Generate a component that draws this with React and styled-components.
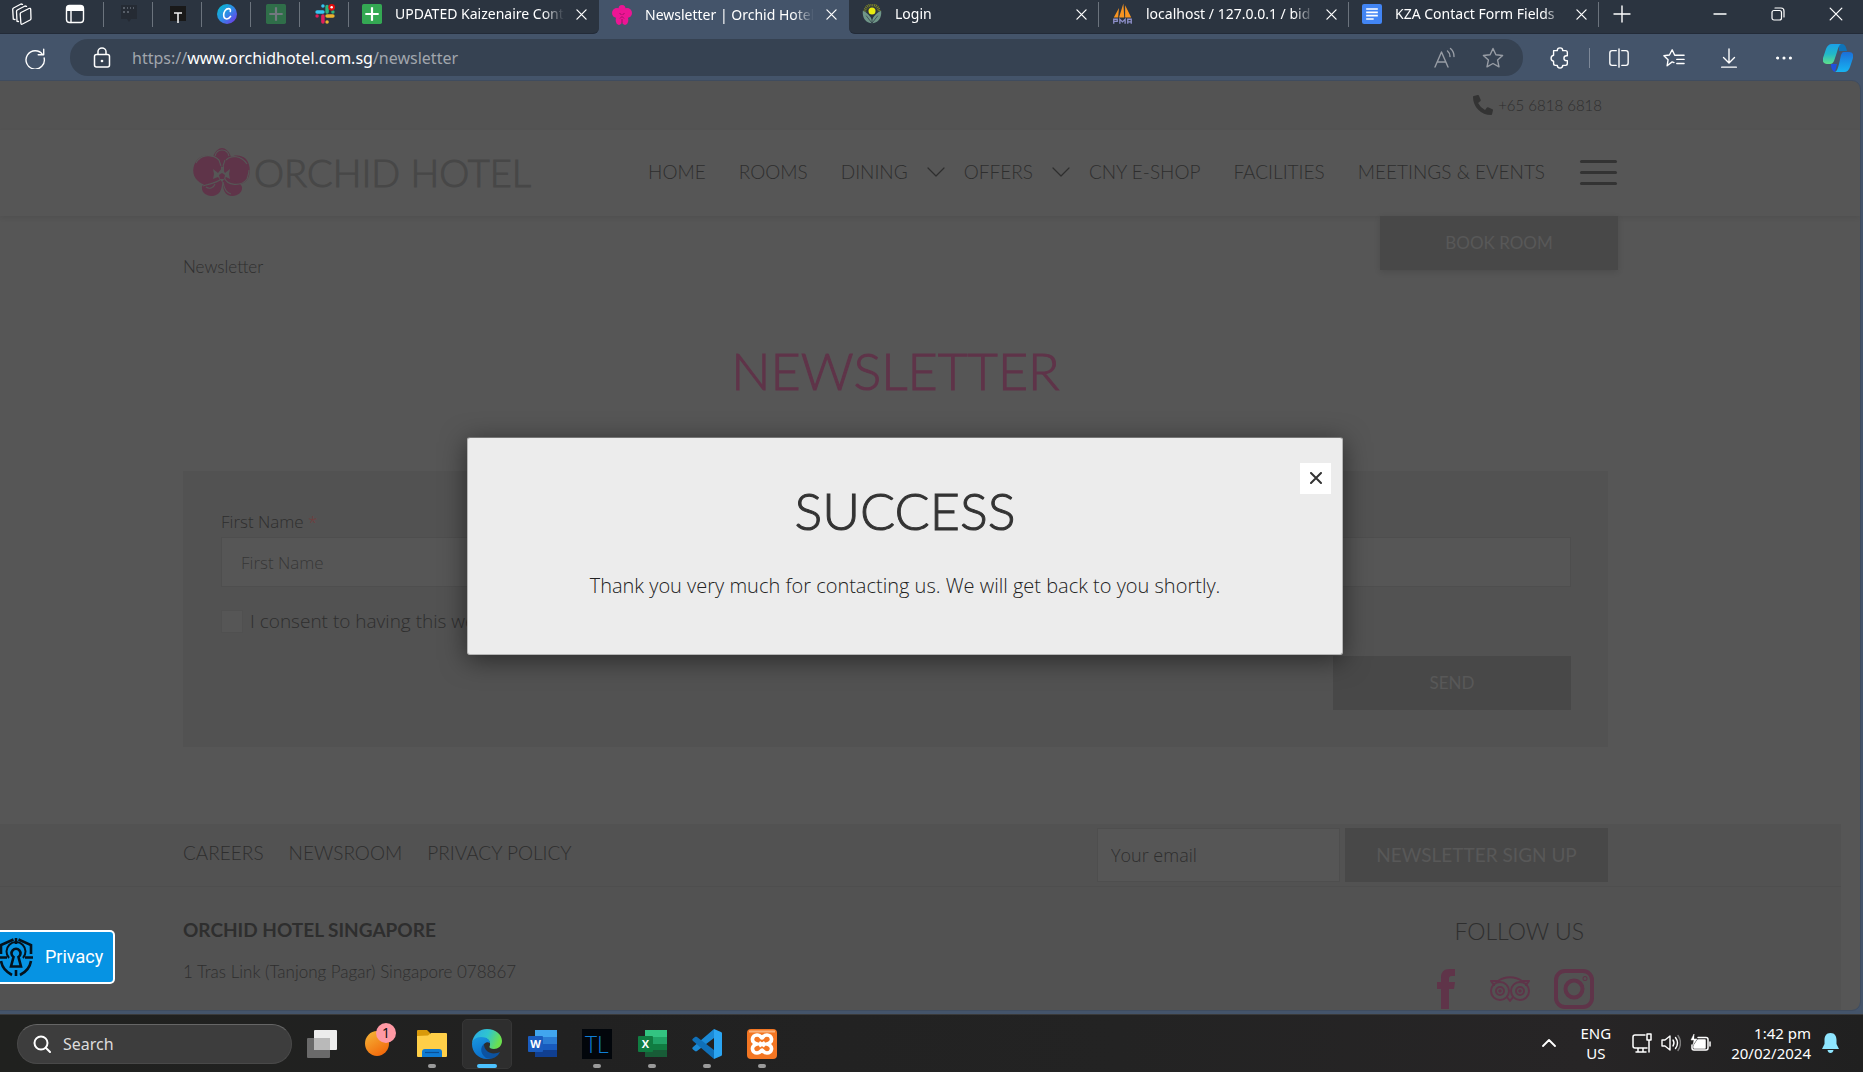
import React from "react";
import styled, { createGlobalStyle } from "styled-components";
import { FaPhoneAlt } from "react-icons/fa";

const UI = `"Noto Sans", "Open Sans", sans-serif`;
const SITE = `Lato, "Open Sans", sans-serif`;
const COPY = `"Open Sans", "Noto Sans", sans-serif`;
const INK = "#2e2e2e";
const ROSE = "#5f3449";

const Global = createGlobalStyle`
  *, *::before, *::after { box-sizing: border-box; }
  body { margin: 0; background: #212121; overflow: hidden; }
  button, input { font: inherit; color: inherit; }
  button { border: 0; padding: 0; background: none; cursor: pointer; }
  a { color: inherit; text-decoration: none; }
  h1, h2, h3, p { margin: 0; font-weight: inherit; }
  svg { display: block; flex: none; }
`;

const Desktop = styled.div`
  height: 100vh;
  display: flex;
  flex-direction: column;
  font-family: ${UI};
`;

const Browser = styled.div`
  flex: 1;
  min-height: 0;
  display: flex;
  flex-direction: column;
  background: #44546a;
  padding: 0 3px 4px 0;
  color: #fff;
`;

/* ---------- tab strip ---------- */
const TabStrip = styled.div`
  display: flex;
  height: 34px;
  margin-right: -3px;
`;

const TabGroup = styled.div`
  display: flex;
  align-items: stretch;
  flex: ${(p) => (p.$grow ? "1" : "none")};
  background: #2b3440;
  border-bottom: 1px solid #232b38;
  border-radius: ${(p) => (p.$grow ? "0 0 0 6px" : "0 0 6px 0")};
`;

const StripTools = styled.div`
  display: flex;
  gap: 29px;
  padding: 2px 17px 7px 10px;
`;

const IconButton = styled.button`
  width: ${(p) => p.$w || 24}px;
  display: flex;
  align-items: center;
  justify-content: center;
`;

const Divider = styled.span`
  width: 1px;
  height: 25px;
  margin: 2px 0 0 -1px;
  background: #6b737d;
`;

const PinnedTab = styled.button`
  width: ${(p) => p.$w || 49}px;
  display: flex;
  align-items: center;
  justify-content: center;
  padding-bottom: 5px;
`;

const TabBox = styled.div`
  width: 250px;
  display: flex;
  align-items: center;
  padding: 0 9px 5px 13px;
`;

const TabTitle = styled.span`
  flex: 1;
  min-width: 0;
  margin: 0 8px 0 13px;
  overflow: hidden;
  white-space: nowrap;
  font-size: 14px;
  line-height: 20px;
  mask-image: linear-gradient(90deg, #000 88%, transparent);
`;

const WindowButtons = styled.div`
  margin-left: auto;
  display: flex;
  gap: 34px;
  padding: 0 15px 5px 0;
`;

/* ---------- address row ---------- */
const Toolbar = styled.div`
  display: flex;
  align-items: center;
  height: 47px;
  flex: none;
  padding-right: 7px;
`;

const Reload = styled(IconButton)`
  width: 70px;
`;

const AddressBar = styled.label`
  flex: 1;
  height: 37px;
  display: flex;
  align-items: center;
  gap: 20px;
  padding: 0 18px 0 22px;
  border-radius: 18px;
  background: #364252;
`;

const Url = styled.span`
  flex: 1;
  font-size: 16px;
  line-height: 22px;
  color: #a1a6ad;
  b { font-weight: 400; color: #fff; }
`;

const AddressTools = styled.div`
  display: flex;
  gap: 25px;
  color: #989da5;
`;

const Extensions = styled.div`
  display: flex;
  align-items: center;
  gap: 18px;
  padding-left: 26px;
`;

const ExtensionSet = styled.div`
  display: flex;
  align-items: center;
  gap: 33px;
`;

const ToolDivider = styled.span`
  width: 1px;
  height: 20px;
  background: #7d8898;
`;

const Copilot = styled(IconButton)`
  margin-left: -5px;
`;

/* ---------- hotel page ---------- */
const Page = styled.main`
  position: relative;
  flex: 1;
  min-height: 0;
  overflow: hidden;
  border-radius: 0 8px 8px 0;
  background: #565656;
  color: ${INK};
  font-family: ${SITE};
  font-weight: 300;
  outline: 1px solid #3f4c5f;
`;

const TopBar = styled.div`
  height: 49px;
  display: flex;
  align-items: center;
  justify-content: flex-end;
  padding: 0 258px 2px 0;
  background: #535353;
`;

const Phone = styled.a`
  display: flex;
  align-items: center;
  gap: 5px;
  font-size: 15px;
  line-height: 20px;
  svg { color: #333; }
`;

const Header = styled.header`
  height: 86px;
  display: flex;
  align-items: center;
  padding: 0 243px 2px 193px;
  box-shadow: 0 2px 5px rgba(0, 0, 0, 0.07);
`;

const Logo = styled.a`
  display: flex;
  align-items: center;
  gap: 4px;
  font-size: 38px;
  line-height: 48px;
  color: #474747;
  -webkit-text-stroke: 1px #474747;
  white-space: nowrap;
`;

const Nav = styled.nav`
  margin-left: auto;
  display: flex;
  align-items: center;
  white-space: nowrap;
  font-size: 19px;
  line-height: 24px;
`;

const NavItem = styled.a`
  display: flex;
  align-items: center;
  gap: ${(p) => (p.$menu ? 19 : 0)}px;
  padding-right: ${(p) => (p.$menu ? 19 : 33)}px;
`;

const Hamburger = styled.button`
  display: grid;
  gap: 8px;
  width: 37px;
  margin-left: 2px;
  span { height: 3px; border-radius: 2px; background: #333; }
`;

const Content = styled.div`
  padding: 0 252px 0 183px;
`;

const SubHeader = styled.div`
  display: flex;
  justify-content: space-between;
  height: 64px;
  margin-right: -10px;
`;

const Crumb = styled.a`
  margin-top: 39px;
  font-size: 17px;
  line-height: 24px;
`;

const DarkButton = styled.button`
  width: ${(p) => p.$w || 238}px;
  height: 54px;
  background: #484848;
  color: #585858;
  font-size: ${(p) => p.$size || 17}px;
  line-height: 24px;
  font-weight: 400;
  box-shadow: ${(p) => (p.$raised ? "0 2px 6px rgba(0,0,0,.12)" : "none")};
`;

const Title = styled.h1`
  margin-top: 60px;
  text-align: center;
  font-size: 52px;
  line-height: 60px;
  color: ${ROSE};
  -webkit-text-stroke: 1px ${ROSE};
`;

const Form = styled.form`
  margin-top: 71px;
  padding: 40px 37px 37px 38px;
  display: flex;
  flex-direction: column;
  background: #525252;
`;

const FieldLabel = styled.label`
  font-family: ${COPY};
  font-size: 17px;
  line-height: 22px;
  margin-bottom: 4px;
  span { color: #743c3c; }
`;

const TextInput = styled.input`
  height: ${(p) => p.$h || 50}px;
  width: ${(p) => p.$w || "100%"};
  padding: 0 ${(p) => p.$pad || 19}px;
  border: 1px solid #4e4e4e;
  border-radius: 0;
  background: #565656;
  font-family: ${COPY};
  font-size: ${(p) => p.$size || 17}px;
  outline: none;
  &::placeholder { color: ${(p) => p.$ink || "#363636"}; opacity: 1; }
`;

const Consent = styled.label`
  display: flex;
  align-items: center;
  gap: 7px;
  height: 23px;
  margin: 23px 0;
  font-family: ${COPY};
  font-size: 19px;
  line-height: 23px;
`;

const Tick = styled.input`
  appearance: none;
  width: 22px;
  height: 23px;
  margin: 0;
  border: 1px solid #505050;
  background: #565656;
`;

const FormActions = styled.div`
  display: flex;
  justify-content: flex-end;
`;

const Footer = styled.footer`
  margin: 77px 19px 0 0;
  height: 400px;
  background: #525252;
`;

const FooterBar = styled.div`
  display: flex;
  align-items: center;
  justify-content: space-between;
  height: 63px;
  padding: 0 233px 0 183px;
  border-bottom: 1px solid #4e4e4e;
`;

const FooterLinks = styled.div`
  display: flex;
  gap: 25px;
  padding-bottom: 4px;
  font-size: 19px;
  line-height: 24px;
`;

const SignUp = styled.form`
  display: flex;
  gap: 5px;
`;

const FooterBody = styled.div`
  display: flex;
  justify-content: space-between;
  padding: 31px 247px 0 183px;
`;

const Hotel = styled.address`
  font-style: normal;
  h3 { font-size: 19px; line-height: 24px; font-weight: 700; }
  p { margin-top: 18px; font-size: 17px; line-height: 24px; }
`;

const Follow = styled.div`
  display: flex;
  flex-direction: column;
  align-items: flex-end;
  h3 { padding-right: 10px; font-size: 23px; line-height: 26px; }
`;

const Socials = styled.div`
  display: flex;
  align-items: center;
  gap: 24px;
  margin-top: 25px;
  color: ${ROSE};
`;

const SocialLink = styled.a`
  width: 40px;
  display: flex;
  justify-content: center;
`;

const PrivacyButton = styled.button`
  position: absolute;
  left: 0;
  bottom: 26px;
  height: 54px;
  display: flex;
  align-items: center;
  gap: 12px;
  padding-right: 10px;
  border: 2px solid #fff;
  border-left: 0;
  border-radius: 0 5px 5px 0;
  background: #0693e3;
  color: #fff;
  font: 400 18px/24px Roboto, sans-serif;
`;

const Overlay = styled.div`
  position: absolute;
  inset: 0;
  display: flex;
  align-items: center;
  justify-content: center;
  padding-right: 50px;
`;

const Modal = styled.section`
  position: relative;
  width: 876px;
  max-width: 90%;
  padding: 42px 40px 53px;
  border: 1px solid #b5b5b5;
  border-top-color: #777;
  border-radius: 3px;
  background: #ececec;
  box-shadow: 0 5px 26px rgba(0, 0, 0, 0.5);
  text-align: center;
  color: #333;
  h2 {
    font-size: 52px;
    line-height: 60px;
    -webkit-text-stroke: 1px #333;
  }
  p { margin-top: 31px; font-family: ${COPY}; font-size: 20px; line-height: 30px; color: #222; }
`;

const ModalClose = styled.button`
  position: absolute;
  top: 25px;
  right: 11px;
  width: 31px;
  height: 31px;
  display: grid;
  place-items: center;
  background: #fff;
`;

/* ---------- taskbar ---------- */
const Taskbar = styled.footer`
  flex: none;
  height: 58px;
  display: flex;
  align-items: center;
  padding: 0 24px 0 17px;
  background: linear-gradient(90deg, #20211f, #212121 30%, #232323 60%, #272526 85%, #202020);
  border-top: 1px solid #3a3a3a;
  color: #fff;
`;

const Search = styled.label`
  width: 275px;
  height: 40px;
  display: flex;
  align-items: center;
  gap: 12px;
  padding: 0 15px;
  border-radius: 20px;
  border: 1px solid #494949;
  border-top-color: #666;
  background: #3d3d3d;
  margin-right: 5px;
`;

const SearchInput = styled.input`
  flex: 1;
  min-width: 0;
  border: 0;
  padding: 0;
  background: none;
  outline: none;
  font-size: 16px;
  &::placeholder { color: #dcdcdc; opacity: 1; }
`;

const Apps = styled.div`
  display: flex;
  gap: 5px;
`;

const AppTile = styled.button`
  position: relative;
  width: 50px;
  height: 50px;
  display: grid;
  place-items: center;
  border-radius: 5px;
  border: 1px solid ${(p) => (p.$active ? "#363636" : "transparent")};
  background: ${(p) => (p.$active ? "#2e2e2e" : "none")};
  &::after {
    content: "";
    position: absolute;
    bottom: 0;
    left: 50%;
    transform: translateX(-50%);
    width: ${(p) => (p.$active ? 20 : 8)}px;
    height: 4px;
    border-radius: 2px;
    background: ${(p) => (p.$active ? "#4cc2ff" : p.$open ? "#9a9a9a" : "transparent")};
  }
`;

const Count = styled.span`
  position: absolute;
  top: 3px;
  right: 5px;
  width: 20px;
  height: 20px;
  border-radius: 50%;
  background: #ff99a4;
  color: #111;
  font-size: 14px;
  line-height: 20px;
`;

const TLIcon = styled.span`
  width: 30px;
  height: 30px;
  background: #02060b;
  color: #0f7fd6;
  font: 300 23px/31px "Open Sans", sans-serif;
`;

const Tray = styled.div`
  margin-left: auto;
  display: flex;
  align-items: center;
  padding-bottom: 2px;
  font-size: 15px;
  line-height: 20px;
`;

const Language = styled.button`
  margin: 0 21px 0 25px;
  text-align: center;
`;

const Status = styled.button`
  display: flex;
  align-items: center;
  gap: 9px;
  margin-right: 20px;
`;

const Clock = styled.button`
  text-align: right;
  margin-right: 11px;
`;

/* ---------- drawings ---------- */
const Ico = ({ w = 22, h, vb = "0 0 24 24", sw = 1.4, fill = "none", children }) => (
  <svg width={w} height={h || w} viewBox={vb} fill={fill} stroke="currentColor" strokeWidth={sw} strokeLinecap="round" strokeLinejoin="round" aria-hidden="true">
    {children}
  </svg>
);

const Plain = ({ w = 20, h, vb = "0 0 24 24", children }) => (
  <svg width={w} height={h || w} viewBox={vb} aria-hidden="true">{children}</svg>
);

const Cross = ({ w = 11, sw = 1.4 }) => (
  <Ico w={w} vb="0 0 12 12" sw={sw}><path d="M1 1l10 10M11 1L1 11" /></Ico>
);

const SheetsIcon = ({ dim }) => (
  <Plain>
    <g opacity={dim ? 0.5 : 1}>
      <rect width="24" height="24" rx="2" fill="#34a853" />
      <path d="M4 10.7h16v2.6H4zM10.7 4h2.6v16h-2.6z" fill={dim ? "#b8bcc0" : "#fff"} />
    </g>
  </Plain>
);

const TalkIcon = () => (
  <Plain w={16} h={18} vb="0 0 16 18">
    <path d="M0 0h16v14h-6l-2 3-2-3H0z" fill="#252b34" />
    <path d="M2 3h2M6 3h1M9 3h1M12 3h1M2 7h2M6 7h2" stroke="#68707a" strokeWidth="1.6" />
  </Plain>
);

const TBoxIcon = () => (
  <Plain w={16} h={17} vb="0 0 16 17">
    <rect width="16" height="15" fill="#191919" />
    <path d="M4 7h8M8 7v10" stroke="#eee" strokeWidth="1.6" />
  </Plain>
);

const CanvaIcon = () => (
  <Plain>
    <defs>
      <linearGradient id="cv" x1="0" y1="0" x2="1" y2="1">
        <stop offset="0" stopColor="#00c4cc" /><stop offset=".5" stopColor="#2f8be6" /><stop offset="1" stopColor="#7d2ae8" />
      </linearGradient>
    </defs>
    <circle cx="12" cy="12" r="12" fill="url(#cv)" />
    <path d="M16 9c.6-2.400-.5-3.500-2.200-3.500C10.500 5.500 8 9.500 8 13.300c0 3 1.500 4.600 3.700 4.600 2 0 3.600-1.300 4.600-3" fill="none" stroke="#fff" strokeWidth="1.900" strokeLinecap="round" />
  </Plain>
);

const SlackIcon = () => (
  <Plain>
    <g strokeWidth="4.200" strokeLinecap="round">
      <path d="M9.500 2.500v0M2.500 9.500h7" stroke="#36c5f0" />
      <path d="M14.500 3v6.500M21.500 9.500v0" stroke="#2eb67d" />
      <path d="M14.500 14.500h7M14.500 21.500v0" stroke="#ecb22e" />
      <path d="M9.500 14.500v7M2.500 14.500v0" stroke="#e01e5a" />
    </g>
    <circle cx="20" cy="4" r="4" fill="#e30b0b" /><circle cx="20" cy="4" r="1.500" fill="#fff" />
  </Plain>
);

/* the page logo: five petals with inner outlines and a pale centre */
const Orchid = ({ color, gap }) => (
  <Plain w={57} h={48} vb="0 0 57 48">
    <g fill={color}>
      <path d="M20 9C22 3 26 0 29 0s7 3 9 9c-2 4-5 8-9 10-4-2-7-6-9-10z" />
      <path d="M28 14C20 6 9 6 4 12c-5 6-5 15 0 20 5 6 18 8 24-2z" />
      <path d="M31 14C37 6 48 6 53 11c5 6 5 17 0 22-5 5-17 7-22-3z" />
      <path d="M29 27c-6 6-19 7-20 12-1 7 8 11 14 8 5-2 7-8 6-20z" />
      <path d="M30 27c6 6 18 7 19 12 1 7-8 11-14 8-4-2-6-8-5-20z" />
    </g>
    <g fill="none" stroke={gap} strokeWidth="1.200">
      <path d="M22 8c1-4 4-6 7-6s6 2 7 6M3 15C7 7 18 5 26 12M33 12c5-5 15-5 21 4M31 29c3 9 17 10 23 2 1-3 2-6 2-9M28 31c-5 5-14 5-18 7M13 39c4 3 8 0 9-3M30 34c1 6 3 11 8 12M26 12l2 6M32 12l-2 6" />
    </g>
    <path d="M29 20l3 5 5-4-1 5 1 5-4-2-4 5-4-5-5 2 1-5-1-5 5 4z" fill={gap} />
    <path d="M29 25l3 2-1 4h-4l-1-4z" fill={color} />
  </Plain>
);

/* the tab favicon version of the same flower, taller and solid */
const OrchidFavicon = () => (
  <Plain w={20} h={20} vb="0 0 20 20">
    <g fill="#ec1594">
      <ellipse cx="10" cy="4" rx="3.500" ry="4" />
      <ellipse cx="5" cy="8" rx="5" ry="5" /><ellipse cx="15" cy="8" rx="5" ry="5" />
      <ellipse cx="7" cy="15" rx="3.300" ry="5" /><ellipse cx="13" cy="15" rx="3.300" ry="5" />
      <rect x="6" y="6" width="8" height="9" />
    </g>
    <path d="M7.500 8l2 2M12.500 8l-2 2M8 13.500l2-2 2 2M10 14v4" stroke="#a00f66" fill="none" />
  </Plain>
);

const LotusIcon = () => (
  <Plain w={20} h={20}>
    <path d="M3.500 9a8.500 8 0 0 1 17 0" fill="none" stroke="#7d8428" strokeWidth="3.500" strokeDasharray="1.200 1" />
    <circle cx="12" cy="8.500" r="4.200" fill="#e8ec10" />
    <path d="M12 23C5 23 0 17 1 8c5 2 9 6 11 11 2-5 6-9 11-11 1 9-4 15-11 15z" fill="#6f9688" />
    <path d="M12 23l-7-9M12 23l7-9M12 23v-9" stroke="#2b3440" strokeWidth=".8" />
  </Plain>
);

const SailIcon = () => (
  <Plain w={21} h={22}>
    <path d="M2 16L8 5l-1 11zM8 16L13 0l1 16zM15 16V2l7 14z" fill="#f79421" />
    <path d="M2 23v-5h4v2.500H2M9 23v-5l3 3 3-3v5M18 23v-5h4v5M18 21h4" fill="none" stroke="#8d8fc8" strokeWidth="1.500" />
  </Plain>
);

const DocsIcon = () => (
  <Plain w={20} h={20}>
    <rect width="24" height="24" rx="2.500" fill="#4285f4" />
    <path d="M5 6h14M5 10h14M5 14h14M5 18h9" stroke="#fff" strokeWidth="2" />
  </Plain>
);

const CopilotIcon = () => (
  <Plain w={30} h={28} vb="0 0 30 28">
    <defs>
      <linearGradient id="c1" x1="0" y1="0" x2="0" y2="1"><stop offset="0" stopColor="#1aa0e8" /><stop offset=".5" stopColor="#22b8c8" /><stop offset="1" stopColor="#5fe08a" /></linearGradient>
      <linearGradient id="c2" x1="0" y1="0" x2="0" y2="1"><stop offset="0" stopColor="#1b6fd8" /><stop offset="1" stopColor="#17b4f2" /></linearGradient>
    </defs>
    <path d="M16 0h3c3 0 4 3 5 7h-8z" fill="#0f73b8" />
    <path d="M8 20h6l-2 8c-3-1-4-4-4-8z" fill="#2050dc" />
    <path d="M9 0h9c-2 1-3 4-4 8l-3 9c-1 2-2 3-4 3H4c-3 0-5-2-4-6L3 5c1-3 3-5 6-5z" fill="url(#c1)" />
    <path d="M21 8h5c3 0 5 2 4 6l-3 9c-1 3-3 5-6 5h-9c2-1 3-4 4-8l2-9c1-2 1-3 3-3z" fill="url(#c2)" />
  </Plain>
);

const FacebookIcon = () => (
  <Plain w={18} h={40} vb="0 0 18 40">
    <path d="M4 40V20H0v-7h4V8.500C4 3 7 0 12.500 0H18v7h-3.500Q12 7 12 9.500V13h6l-1 7h-5v20z" fill={ROSE} />
  </Plain>
);

const OwlIcon = () => (
  <Ico w={40} h={26} vb="0 0 40 26" sw={2}>
    <path d="M1 5h7c7-5 17-5 24 0h7l-3 4M1 5l3 4M17 21l3 4 3-4" />
    <circle cx="10" cy="15" r="9" /><circle cx="30" cy="15" r="9" />
    <circle cx="10" cy="15" r="4" /><circle cx="30" cy="15" r="4" />
    <circle cx="10" cy="15" r=".8" /><circle cx="30" cy="15" r=".8" />
  </Ico>
);

const InstaIcon = () => (
  <Ico w={40} vb="0 0 40 40" sw={4}>
    <rect x="2" y="2" width="36" height="36" rx="9" />
    <circle cx="20" cy="20" r="8.500" />
    <circle cx="31" cy="9.500" r=".5" />
  </Ico>
);

const ShieldIcon = () => (
  <svg width="33" height="40" viewBox="0 0 33 40" fill="none" stroke="#04121c" strokeWidth="2.600" aria-hidden="true">
    <path d="M13.500 2.500L1 8v9M18.500 2.500L31 8v9M16 1v6M0 20.500h7M25 20.500h8M1 24c1 6 5 11 11 14M31 24c-1 6-5 11-11 14M16 33v6" />
    <path d="M13.500 20a4.500 4.500 0 1 1 5 0l2.500 9.500H11z" />
    <path d="M9 21a9.500 9.500 0 1 1 14 0" strokeWidth="2" />
  </svg>
);

const TaskViewIcon = () => (
  <Plain w={30} h={28} vb="0 0 30 28">
    <rect y="8" width="23" height="20" rx="1" fill="#6a6a6a" />
    <rect x="7" width="23" height="20" rx="1" fill="#ededed" />
    <path d="M7 8h16v12H7z" fill="#b9b9b9" />
  </Plain>
);

const OrangeIcon = () => (
  <Plain w={24} h={25} vb="0 0 24 25">
    <defs><linearGradient id="or" x1="0" y1="0" x2=".6" y2="1"><stop offset="0" stopColor="#f5b93a" /><stop offset="1" stopColor="#f26b0c" /></linearGradient></defs>
    <ellipse cx="12" cy="12.500" rx="12" ry="12.500" fill="url(#or)" />
  </Plain>
);

const FolderIcon = () => (
  <Plain w={30} h={27} vb="0 0 30 27">
    <path d="M0 1q0-1 1-1h9l3 3v6H0z" fill="#d99a0b" />
    <path d="M0 6l11-.5 3-2.500h15q1 0 1 1v22q0 1-1 1H1q-1 0-1-1z" fill="#ffcf48" />
    <path d="M5 27v-5q0-3 3-3h14q3 0 3 3v5z" fill="#0f7bd3" />
    <path d="M8 22.500h14" stroke="#0a4f94" strokeWidth="1.200" />
  </Plain>
);

const EdgeIcon = () => (
  <Plain w={30} vb="0 0 30 30">
    <defs>
      <linearGradient id="e1" x1="0" y1="0" x2="1" y2=".3"><stop offset="0" stopColor="#2aa8e8" /><stop offset=".55" stopColor="#2fc5d0" /><stop offset="1" stopColor="#6be04e" /></linearGradient>
      <linearGradient id="e2" x1="0" y1="0" x2=".3" y2="1"><stop offset="0" stopColor="#1a98e0" /><stop offset="1" stopColor="#0b6fcb" /></linearGradient>
    </defs>
    <path d="M0 14C1 6 7 0 15 0c9 0 15 6 15 12 0 5-4 8-8 8-3 0-5-1-4.500-2.500C19 15 18 9 11 9 6 9 1 11 0 14z" fill="url(#e1)" />
    <path d="M0 15c0-4 4-7 9-7 6 0 9 3 9 6-3-2-7 0-7 5 0 5 4 9 8 10.500-1.500.5-3 .5-4 .5C6 30 0 23 0 15z" fill="url(#e2)" />
    <path d="M12 15c-4 3-4 10 2 14 5 2 11 0 14-6-4 2-10 2-13-1-2-2-3-4-3-7z" fill="#0c52a0" />
  </Plain>
);

const OfficeIcon = ({ letter, c }) => (
  <Plain w={29} h={27} vb="0 0 29 27">
    <rect x="7" width="22" height="7" fill={c[0]} /><rect x="7" y="7" width="22" height="7" fill={c[1]} />
    <rect x="7" y="14" width="22" height="7" fill={c[2]} /><rect x="7" y="20" width="22" height="7" fill={c[3]} />
    <rect y="6" width="15" height="16" rx="1" fill={c[4]} />
    <text x="7.500" y="18" textAnchor="middle" fontFamily="Open Sans" fontWeight="700" fontSize="11" fill="#fff">{letter}</text>
  </Plain>
);

const CodeIcon = () => (
  <Plain w={30} vb="0 0 30 30">
    <path d="M22 0L1 18c-1 1-1 1.500 0 2.500l2 1.500c.6.500 1.300.5 2 0L22 9z" fill="#1b8ad6" />
    <path d="M22 30L1 12c-1-1-1-1.500 0-2.500L3 8c.6-.5 1.300-.5 2 0l17 13z" fill="#1070b8" />
    <path d="M22 0l7 3c.700.300 1 .8 1 1.500v21c0 .7-.3 1.200-1 1.500l-7 3z" fill="#2ba5f2" />
  </Plain>
);

const XamppIcon = () => (
  <Plain w={30} vb="0 0 30 30">
    <rect width="30" height="30" rx="4" fill="#f37623" />
    <path d="M2 2.500h26" stroke="#f9b27d" strokeWidth="2" />
    <path d="M10 15c-7-2-5-9 0-9 4 0 4 3 5 3s1-3 5-3c5 0 7 7 0 9 7 2 5 9 0 9-4 0-4-3-5-3s-1 3-5 3c-5 0-7-7 0-9zM12 13.500c3 2 3 2 6 0M12 17c3-2 3-2 6 0" fill="none" stroke="#fff" strokeWidth="3.600" />
  </Plain>
);

const Chevron = () => (
  <Ico w={18} h={10} vb="0 0 18 10" sw={1.2}><path d="M1 1l8 8 8-8" /></Ico>
);

/* ---------- parts ---------- */
const Tab = ({ icon, title }) => (
  <TabBox>
    {icon}
    <TabTitle>{title}</TabTitle>
    <IconButton $w={18} aria-label={`Close ${title}`}><Cross /></IconButton>
  </TabBox>
);

const pinned = [
  ["Talk", <TalkIcon />],
  ["T", <TBoxIcon />],
  ["Canva", <CanvaIcon />],
  ["Sheets", <SheetsIcon dim />],
  ["Slack", <SlackIcon />],
];

const nav = [["HOME"], ["ROOMS"], ["DINING", true], ["OFFERS", true], ["CNY E-SHOP"], ["FACILITIES"], ["MEETINGS & EVENTS"]];

const apps = [
  { name: "Task view", icon: <TaskViewIcon /> },
  { name: "Widgets", icon: <OrangeIcon />, count: 1 },
  { name: "File Explorer", icon: <FolderIcon />, open: true },
  { name: "Edge", icon: <EdgeIcon />, open: true, active: true },
  { name: "Word", icon: <OfficeIcon letter="W" c={["#41a5ee", "#2b7cd3", "#185abd", "#103f91", "#1a5cbe"]} /> },
  { name: "TL", icon: <TLIcon>TL</TLIcon>, open: true },
  { name: "Excel", icon: <OfficeIcon letter="X" c={["#33c481", "#21a366", "#107c41", "#185c37", "#107c41"]} />, open: true },
  { name: "Code", icon: <CodeIcon />, open: true },
  { name: "XAMPP", icon: <XamppIcon />, open: true },
];

export default function App() {
  return (
    <Desktop>
      <Global />
      <Browser>
        <TabStrip>
          <TabGroup>
            <StripTools>
              <IconButton aria-label="Workspaces">
                <Ico w={24} sw={1.3}>
                  <path d="M11 10.500l8-4q1.500-.7 1.700.8l.3 9.200q0 1-.9 1.500l-7.600 4q-1.500.8-1.600-.8L10.200 12q0-1 .8-1.500zM8.500 19.500l-1.500-.2-.5-9.800q0-1 .8-1.500L15 4l1.500.3M5 17.500l-1.700-.3L2.700 7.500q0-1 .8-1.500L11 2l1.500.3" />
                </Ico>
              </IconButton>
              <IconButton aria-label="Tab actions">
                <Ico w={20} vb="0 0 20 20">
                  <rect x="1.500" y="1.500" width="17" height="17" rx="3" /><path d="M6 7v11.500" /><path d="M2 4.500h16" strokeWidth="5" strokeLinecap="butt" />
                </Ico>
              </IconButton>
            </StripTools>
            {pinned.map(([name, icon]) => (
              <React.Fragment key={name}>
                <Divider />
                <PinnedTab aria-label={name}>{icon}</PinnedTab>
              </React.Fragment>
            ))}
            <Divider />
            <Tab icon={<SheetsIcon />} title="UPDATED Kaizenaire Cont" />
          </TabGroup>
          <Tab icon={<OrchidFavicon />} title="Newsletter | Orchid Hotel" />
          <TabGroup $grow>
            <Tab icon={<LotusIcon />} title="Login" />
            <Divider />
            <Tab icon={<SailIcon />} title="localhost / 127.0.0.1 / bid" />
            <Divider />
            <Tab icon={<DocsIcon />} title="KZA Contact Form Fields" />
            <Divider />
            <PinnedTab $w={45} aria-label="New tab"><Ico w={18} vb="0 0 18 18"><path d="M9 1v16M1 9h16" /></Ico></PinnedTab>
            <WindowButtons>
              <IconButton aria-label="Minimise"><Ico w={14} vb="0 0 14 14"><path d="M1 7h12" /></Ico></IconButton>
              <IconButton aria-label="Restore"><Ico w={14} vb="0 0 14 14" sw={1.2}><rect x="1" y="3.500" width="9.500" height="9.500" rx="2" /><path d="M4 1h6q3 0 3 3v6" /></Ico></IconButton>
              <IconButton aria-label="Close"><Cross w={14} sw={1.1} /></IconButton>
            </WindowButtons>
          </TabGroup>
        </TabStrip>

        <Toolbar>
          <Reload aria-label="Reload">
            <Ico w={22} sw={1.5}><path d="M20.500 8.500A10 10 0 1 0 22 12M21.500 2.500v6h-6" /></Ico>
          </Reload>
          <AddressBar>
            <Ico w={20} h={22} vb="0 0 20 22" sw={1.5}>
              <rect x="2.500" y="7.500" width="15" height="12.500" rx="2" /><path d="M6 7V4.500a4 3.500 0 0 1 8 0V7" /><circle cx="10" cy="14" r=".6" />
            </Ico>
            <Url>https://<b>www.orchidhotel.com.sg</b>/newsletter</Url>
            <AddressTools>
              <Ico w={24} sw={1.4}><path d="M3 21L9.500 6 16 21M5.500 16h8M15.500 5q2.500 2 2.500 5.500M18.500 2.500Q22 5.500 22 10.500" /></Ico>
              <Ico w={24}><path d="M12 2.500l2.900 6.200 6.700.8-5 4.600 1.400 6.700L12 17.500l-6 3.300 1.400-6.700-5-4.600 6.700-.8z" /></Ico>
            </AddressTools>
          </AddressBar>
          <Extensions>
            <IconButton $w={22} aria-label="Extensions">
              <Ico w={22} sw={1.5}><path d="M5 4h4a3 3 0 0 1 6 0h3q2 0 2 2v3.500h-1a2.700 2.700 0 0 0 0 5.400h1V18q0 2-2 2h-3a3 3 0 0 1-6 0H7q-2 0-2-2v-2.500a3.300 3.300 0 0 1 0-6.500z" /></Ico>
            </IconButton>
            <ToolDivider />
            <ExtensionSet>
              <IconButton $w={22} aria-label="Split screen">
                <Ico w={22} sw={1.5}><path d="M9 4H4.500Q2 4 2 6.500v11Q2 20 4.500 20H9M15 4h4.500Q22 4 22 6.500v11q0 2.500-2.500 2.500H15M12 2v20" /></Ico>
              </IconButton>
              <IconButton $w={22} aria-label="Favourites">
                <Ico w={22} sw={1.5}><path d="M12 17l-2-.8L4.500 20.500l1-6.500-4.500-4.500 6-.8L10 3l2.800 6H23M15 13.500h8M15 18h8" /></Ico>
              </IconButton>
              <IconButton $w={22} aria-label="Downloads">
                <Ico w={22} sw={1.5}><path d="M12 2v15M6 11.500l6 6 6-6M4 22h16" /></Ico>
              </IconButton>
              <IconButton $w={22} aria-label="More">
                <Ico w={22} fill="currentColor"><circle cx="5" cy="12" r="1" /><circle cx="12" cy="12" r="1" /><circle cx="19" cy="12" r="1" /></Ico>
              </IconButton>
              <Copilot $w={30} aria-label="Copilot"><CopilotIcon /></Copilot>
            </ExtensionSet>
          </Extensions>
        </Toolbar>

        <Page>
          <TopBar>
            <Phone href="tel:+6568186818"><FaPhoneAlt size={20} />+65 6818 6818</Phone>
          </TopBar>
          <Header>
            <Logo href="#home"><Orchid color="#5f3449" gap="#565656" />ORCHID HOTEL</Logo>
            <Nav>
              {nav.map(([name, menu]) => (
                <NavItem key={name} href="#" $menu={menu}>{name}{menu && <Chevron />}</NavItem>
              ))}
              <Hamburger aria-label="Menu"><span /><span /><span /></Hamburger>
            </Nav>
          </Header>
          <Content>
            <SubHeader>
              <Crumb href="#newsletter">Newsletter</Crumb>
              <DarkButton $raised>BOOK ROOM</DarkButton>
            </SubHeader>
            <Title>NEWSLETTER</Title>
            <Form>
              <FieldLabel htmlFor="first-name">First Name <span>*</span></FieldLabel>
              <TextInput id="first-name" placeholder="First Name" />
              <Consent><Tick type="checkbox" />I consent to having this website</Consent>
              <FormActions><DarkButton type="button">SEND</DarkButton></FormActions>
            </Form>
          </Content>
          <Footer>
            <FooterBar>
              <FooterLinks><a href="#careers">CAREERS</a><a href="#newsroom">NEWSROOM</a><a href="#privacy">PRIVACY POLICY</a></FooterLinks>
              <SignUp>
                <TextInput aria-label="Your email" placeholder="Your email" $w="243px" $h={54} $pad={13} $size={18} $ink="#2e2e2e" />
                <DarkButton type="button" $w={263} $size={19}>NEWSLETTER SIGN UP</DarkButton>
              </SignUp>
            </FooterBar>
            <FooterBody>
              <Hotel>
                <h3>ORCHID HOTEL SINGAPORE</h3>
                <p>1 Tras Link (Tanjong Pagar) Singapore 078867</p>
              </Hotel>
              <Follow>
                <h3>FOLLOW US</h3>
                <Socials>
                  <SocialLink href="#facebook" aria-label="Facebook"><FacebookIcon /></SocialLink>
                  <SocialLink href="#tripadvisor" aria-label="Tripadvisor"><OwlIcon /></SocialLink>
                  <SocialLink href="#instagram" aria-label="Instagram"><InstaIcon /></SocialLink>
                </Socials>
              </Follow>
            </FooterBody>
          </Footer>

          <Overlay>
            <Modal role="dialog" aria-labelledby="modal-title">
              <ModalClose aria-label="Close"><Cross w={12} sw={2} /></ModalClose>
              <h2 id="modal-title">SUCCESS</h2>
              <p>Thank you very much for contacting us. We will get back to you shortly.</p>
            </Modal>
          </Overlay>
          <PrivacyButton><ShieldIcon />Privacy</PrivacyButton>
        </Page>
      </Browser>

      <Taskbar>
        <Search>
          <Ico w={18} vb="0 0 18 18" sw={2}><circle cx="8" cy="8" r="6.500" /><path d="M13 13l4 4" /></Ico>
          <SearchInput placeholder="Search" aria-label="Search" />
        </Search>
        <Apps>
          {apps.map((a) => (
            <AppTile key={a.name} aria-label={a.name} $open={a.open} $active={a.active}>
              {a.icon}
              {a.count && <Count>{a.count}</Count>}
            </AppTile>
          ))}
        </Apps>
        <Tray>
          <IconButton $w={14} aria-label="Hidden icons"><Ico w={14} h={8} vb="0 0 14 8" sw={1.8}><path d="M1 7l6-6 6 6" /></Ico></IconButton>
          <Language>ENG<br />US</Language>
          <Status aria-label="Network, volume, battery">
            <Ico w={20} h={20} vb="0 0 20 20" sw={1.5}><path d="M13 2H3Q1 2 1 4v9q0 2 2 2h12M6 15v4M11 15v4M4 19h10M15 1h4v6h-4zM17 7v12" /></Ico>
            <Ico w={20} h={18} vb="0 0 20 18" sw={1.4}><path d="M1 6v6h3l5 4V2L4 6zM12 6q2 3 0 6M14.500 3.500q4 5.500 0 11" /><path d="M17 1.500q5 7.500 0 15" opacity=".4" /></Ico>
            <Ico w={21} h={18} vb="0 0 21 18" sw={1.5}><path d="M8 3.500h8q2 0 2 2V14q0 2-2 2H4q-2 0-2-2v-3M20 8v4" /><path d="M8 6h7v8H4v-2z" fill="currentColor" /><path d="M4 0L1 6h3l-1 5 4-6H4z" fill="currentColor" strokeWidth=".5" /></Ico>
          </Status>
          <Clock>1:42 pm<br />20/02/2024</Clock>
          <IconButton $w={17} aria-label="Notifications">
            <Plain w={17} h={20} vb="0 0 17 20"><path d="M8.500 0C4 0 2.500 3.500 2.500 7v4L0 16h17l-2.500-5V7c0-3.500-1.500-7-6-7zM5.500 17h6q-.5 3-3 3t-3-3z" fill="#8fe6ff" /></Plain>
          </IconButton>
        </Tray>
      </Taskbar>
    </Desktop>
  );
}
